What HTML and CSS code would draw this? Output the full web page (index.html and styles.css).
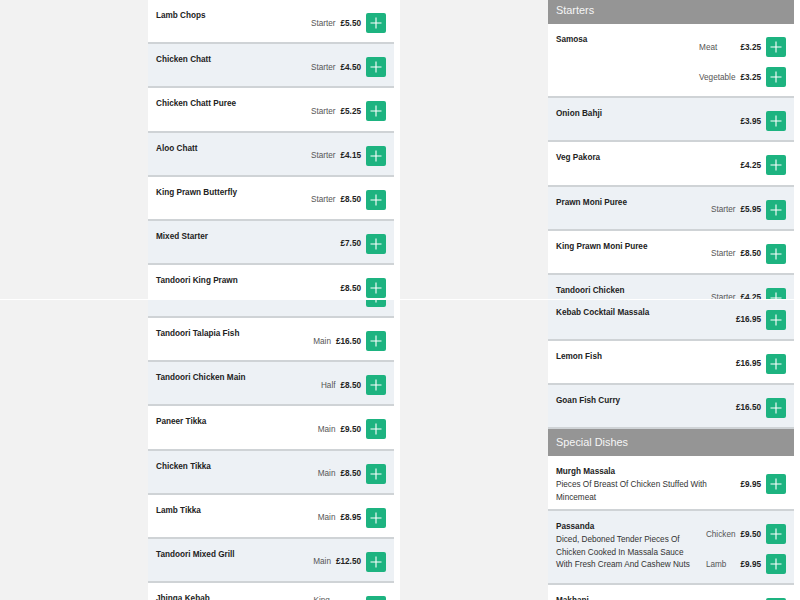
FILE: index.html
```html
<!DOCTYPE html>
<html lang="en">

<head>
    <meta charset="UTF-8">
    <title>Menu</title>
    <link rel="stylesheet" href="styles.css">
</head>

<body>
    <!-- top half of the page -->
    <div class="pane pane-top">
        <div class="col col-left">
            <div class="list">
                <div class="item">
                    <div class="info"><div class="name">Lamb Chops</div></div>
                    <div class="opts">
                        <span class="label">Starter</span><span class="price">£5.50</span>
                        <button class="add"><svg width="20" height="20" viewBox="0 0 20 20"><path d="M4.5 10H15.5M10 4.5V15.5" stroke="#fff" stroke-width="1.1"/></svg></button>
                    </div>
                </div>
                <div class="item alt">
                    <div class="info"><div class="name">Chicken Chatt</div></div>
                    <div class="opts">
                        <span class="label">Starter</span><span class="price">£4.50</span>
                        <button class="add"><svg width="20" height="20" viewBox="0 0 20 20"><path d="M4.5 10H15.5M10 4.5V15.5" stroke="#fff" stroke-width="1.1"/></svg></button>
                    </div>
                </div>
                <div class="item">
                    <div class="info"><div class="name">Chicken Chatt Puree</div></div>
                    <div class="opts">
                        <span class="label">Starter</span><span class="price">£5.25</span>
                        <button class="add"><svg width="20" height="20" viewBox="0 0 20 20"><path d="M4.5 10H15.5M10 4.5V15.5" stroke="#fff" stroke-width="1.1"/></svg></button>
                    </div>
                </div>
                <div class="item alt">
                    <div class="info"><div class="name">Aloo Chatt</div></div>
                    <div class="opts">
                        <span class="label">Starter</span><span class="price">£4.15</span>
                        <button class="add"><svg width="20" height="20" viewBox="0 0 20 20"><path d="M4.5 10H15.5M10 4.5V15.5" stroke="#fff" stroke-width="1.1"/></svg></button>
                    </div>
                </div>
                <div class="item">
                    <div class="info"><div class="name">King Prawn Butterfly</div></div>
                    <div class="opts">
                        <span class="label">Starter</span><span class="price">£8.50</span>
                        <button class="add"><svg width="20" height="20" viewBox="0 0 20 20"><path d="M4.5 10H15.5M10 4.5V15.5" stroke="#fff" stroke-width="1.1"/></svg></button>
                    </div>
                </div>
                <div class="item alt">
                    <div class="info"><div class="name">Mixed Starter</div></div>
                    <div class="opts">
                        <span class="label"></span><span class="price">£7.50</span>
                        <button class="add"><svg width="20" height="20" viewBox="0 0 20 20"><path d="M4.5 10H15.5M10 4.5V15.5" stroke="#fff" stroke-width="1.1"/></svg></button>
                    </div>
                </div>
                <div class="item">
                    <div class="info"><div class="name">Tandoori King Prawn</div></div>
                    <div class="opts">
                        <span class="label"></span><span class="price">£8.50</span>
                        <button class="add"><svg width="20" height="20" viewBox="0 0 20 20"><path d="M4.5 10H15.5M10 4.5V15.5" stroke="#fff" stroke-width="1.1"/></svg></button>
                    </div>
                </div>
            </div>
        </div>

        <div class="col col-right">
            <div class="list">
                <div class="cat">Starters</div>
                <div class="item">
                    <div class="info"><div class="name">Samosa</div></div>
                    <div class="opts">
                        <span class="label">Meat</span><span class="price">£3.25</span>
                        <button class="add"><svg width="20" height="20" viewBox="0 0 20 20"><path d="M4.5 10H15.5M10 4.5V15.5" stroke="#fff" stroke-width="1.1"/></svg></button>
                        <span class="label">Vegetable</span><span class="price">£3.25</span>
                        <button class="add"><svg width="20" height="20" viewBox="0 0 20 20"><path d="M4.5 10H15.5M10 4.5V15.5" stroke="#fff" stroke-width="1.1"/></svg></button>
                    </div>
                </div>
                <div class="item alt">
                    <div class="info"><div class="name">Onion Bahji</div></div>
                    <div class="opts">
                        <span class="label"></span><span class="price">£3.95</span>
                        <button class="add"><svg width="20" height="20" viewBox="0 0 20 20"><path d="M4.5 10H15.5M10 4.5V15.5" stroke="#fff" stroke-width="1.1"/></svg></button>
                    </div>
                </div>
                <div class="item">
                    <div class="info"><div class="name">Veg Pakora</div></div>
                    <div class="opts">
                        <span class="label"></span><span class="price">£4.25</span>
                        <button class="add"><svg width="20" height="20" viewBox="0 0 20 20"><path d="M4.5 10H15.5M10 4.5V15.5" stroke="#fff" stroke-width="1.1"/></svg></button>
                    </div>
                </div>
                <div class="item alt">
                    <div class="info"><div class="name">Prawn Moni Puree</div></div>
                    <div class="opts">
                        <span class="label">Starter</span><span class="price">£5.95</span>
                        <button class="add"><svg width="20" height="20" viewBox="0 0 20 20"><path d="M4.5 10H15.5M10 4.5V15.5" stroke="#fff" stroke-width="1.1"/></svg></button>
                    </div>
                </div>
                <div class="item">
                    <div class="info"><div class="name">King Prawn Moni Puree</div></div>
                    <div class="opts">
                        <span class="label">Starter</span><span class="price">£8.50</span>
                        <button class="add"><svg width="20" height="20" viewBox="0 0 20 20"><path d="M4.5 10H15.5M10 4.5V15.5" stroke="#fff" stroke-width="1.1"/></svg></button>
                    </div>
                </div>
                <div class="item alt">
                    <div class="info"><div class="name">Tandoori Chicken</div></div>
                    <div class="opts">
                        <span class="label">Starter</span><span class="price">£4.25</span>
                        <button class="add"><svg width="20" height="20" viewBox="0 0 20 20"><path d="M4.5 10H15.5M10 4.5V15.5" stroke="#fff" stroke-width="1.1"/></svg></button>
                    </div>
                </div>
            </div>
        </div>
    </div>

    <!-- bottom half, scrolled further down -->
    <div class="pane pane-bottom">
        <div class="col col-left">
            <div class="list">
                <div class="item alt">
                    <div class="info"><div class="name">Tandoori Chicken Tikka</div></div>
                    <div class="opts">
                        <span class="label"></span><span class="price">£8.50</span>
                        <button class="add"><svg width="20" height="20" viewBox="0 0 20 20"><path d="M4.5 10H15.5M10 4.5V15.5" stroke="#fff" stroke-width="1.1"/></svg></button>
                    </div>
                </div>
                <div class="item">
                    <div class="info"><div class="name">Tandoori Talapia Fish</div></div>
                    <div class="opts">
                        <span class="label">Main</span><span class="price">£16.50</span>
                        <button class="add"><svg width="20" height="20" viewBox="0 0 20 20"><path d="M4.5 10H15.5M10 4.5V15.5" stroke="#fff" stroke-width="1.1"/></svg></button>
                    </div>
                </div>
                <div class="item alt">
                    <div class="info"><div class="name">Tandoori Chicken Main</div></div>
                    <div class="opts">
                        <span class="label">Half</span><span class="price">£8.50</span>
                        <button class="add"><svg width="20" height="20" viewBox="0 0 20 20"><path d="M4.5 10H15.5M10 4.5V15.5" stroke="#fff" stroke-width="1.1"/></svg></button>
                    </div>
                </div>
                <div class="item">
                    <div class="info"><div class="name">Paneer Tikka</div></div>
                    <div class="opts">
                        <span class="label">Main</span><span class="price">£9.50</span>
                        <button class="add"><svg width="20" height="20" viewBox="0 0 20 20"><path d="M4.5 10H15.5M10 4.5V15.5" stroke="#fff" stroke-width="1.1"/></svg></button>
                    </div>
                </div>
                <div class="item alt">
                    <div class="info"><div class="name">Chicken Tikka</div></div>
                    <div class="opts">
                        <span class="label">Main</span><span class="price">£8.50</span>
                        <button class="add"><svg width="20" height="20" viewBox="0 0 20 20"><path d="M4.5 10H15.5M10 4.5V15.5" stroke="#fff" stroke-width="1.1"/></svg></button>
                    </div>
                </div>
                <div class="item">
                    <div class="info"><div class="name">Lamb Tikka</div></div>
                    <div class="opts">
                        <span class="label">Main</span><span class="price">£8.95</span>
                        <button class="add"><svg width="20" height="20" viewBox="0 0 20 20"><path d="M4.5 10H15.5M10 4.5V15.5" stroke="#fff" stroke-width="1.1"/></svg></button>
                    </div>
                </div>
                <div class="item alt">
                    <div class="info"><div class="name">Tandoori Mixed Grill</div></div>
                    <div class="opts">
                        <span class="label">Main</span><span class="price">£12.50</span>
                        <button class="add"><svg width="20" height="20" viewBox="0 0 20 20"><path d="M4.5 10H15.5M10 4.5V15.5" stroke="#fff" stroke-width="1.1"/></svg></button>
                    </div>
                </div>
                <div class="item">
                    <div class="info"><div class="name">Jhinga Kebab</div></div>
                    <div class="opts">
                        <span class="label label-wrap">King Prawn</span><span class="price">£9.95</span>
                        <button class="add"><svg width="20" height="20" viewBox="0 0 20 20"><path d="M4.5 10H15.5M10 4.5V15.5" stroke="#fff" stroke-width="1.1"/></svg></button>
                    </div>
                </div>
            </div>
        </div>

        <div class="col col-right">
            <div class="list">
                <div class="item alt">
                    <div class="info"><div class="name">Kebab Cocktail Massala</div></div>
                    <div class="opts">
                        <span class="label"></span><span class="price">£16.95</span>
                        <button class="add"><svg width="20" height="20" viewBox="0 0 20 20"><path d="M4.5 10H15.5M10 4.5V15.5" stroke="#fff" stroke-width="1.1"/></svg></button>
                    </div>
                </div>
                <div class="item">
                    <div class="info"><div class="name">Lemon Fish</div></div>
                    <div class="opts">
                        <span class="label"></span><span class="price">£16.95</span>
                        <button class="add"><svg width="20" height="20" viewBox="0 0 20 20"><path d="M4.5 10H15.5M10 4.5V15.5" stroke="#fff" stroke-width="1.1"/></svg></button>
                    </div>
                </div>
                <div class="item alt">
                    <div class="info"><div class="name">Goan Fish Curry</div></div>
                    <div class="opts">
                        <span class="label"></span><span class="price">£16.50</span>
                        <button class="add"><svg width="20" height="20" viewBox="0 0 20 20"><path d="M4.5 10H15.5M10 4.5V15.5" stroke="#fff" stroke-width="1.1"/></svg></button>
                    </div>
                </div>
                <div class="cat">Special Dishes</div>
                <div class="item">
                    <div class="info">
                        <div class="name">Murgh Massala</div>
                        <div class="desc">Pieces Of Breast Of Chicken Stuffed With Mincemeat</div>
                    </div>
                    <div class="opts">
                        <span class="label"></span><span class="price">£9.95</span>
                        <button class="add"><svg width="20" height="20" viewBox="0 0 20 20"><path d="M4.5 10H15.5M10 4.5V15.5" stroke="#fff" stroke-width="1.1"/></svg></button>
                    </div>
                </div>
                <div class="item alt">
                    <div class="info">
                        <div class="name">Passanda</div>
                        <div class="desc">Diced, Deboned Tender Pieces Of Chicken Cooked In Massala Sauce With Fresh Cream And Cashew Nuts</div>
                    </div>
                    <div class="opts">
                        <span class="label">Chicken</span><span class="price">£9.50</span>
                        <button class="add"><svg width="20" height="20" viewBox="0 0 20 20"><path d="M4.5 10H15.5M10 4.5V15.5" stroke="#fff" stroke-width="1.1"/></svg></button>
                        <span class="label">Lamb</span><span class="price">£9.95</span>
                        <button class="add"><svg width="20" height="20" viewBox="0 0 20 20"><path d="M4.5 10H15.5M10 4.5V15.5" stroke="#fff" stroke-width="1.1"/></svg></button>
                    </div>
                </div>
                <div class="item">
                    <div class="info"><div class="name">Makhani</div></div>
                    <div class="opts">
                        <span class="label"></span><span class="price">£9.95</span>
                        <button class="add"><svg width="20" height="20" viewBox="0 0 20 20"><path d="M4.5 10H15.5M10 4.5V15.5" stroke="#fff" stroke-width="1.1"/></svg></button>
                    </div>
                </div>
            </div>
        </div>
    </div>
</body>

</html>
```

FILE: styles.css
```css
* {
    box-sizing: border-box;
}

body {
    margin: 0;
    padding: 0;
    background: #f2f2f2;
    font-family: "Liberation Sans", Arial, sans-serif;
    font-size: 8.2px;
    color: #222;
    overflow: hidden;
}

/* two scroll positions stacked on each other */
.pane {
    display: flex;
    gap: 148px;
    height: 300px;
    padding-left: 148px;
    overflow: hidden;
}

.pane-top {
    border-bottom: 1px solid #fff;
}

.col {
    width: 252px;
    padding-right: 6px; /* scrollbar track */
    background: #fff;
    overflow: hidden;
}

.pane-top .col-right .list {
    margin-top: -3px;
}

.pane-bottom .col-left .list {
    margin-top: -26.2px;
}

.pane-bottom .col-right .list {
    margin-top: -3.5px;
}

.cat {
    height: 27px;
    line-height: 27px;
    padding-left: 8px;
    background: #959595;
    color: #f6f6f6;
    font-size: 10.9px;
}

.item {
    display: flex;
    gap: 10px;
    padding: 0 8px;
    background: #fff;
    border-bottom: 2px solid #cfd3d6;
}

.item.alt {
    background: #edf1f5;
}

.info {
    flex: 1;
    padding: 11px 0 5px;
}

.name {
    font-weight: bold;
    line-height: 10px;
}

.desc {
    margin-top: 2px;
    line-height: 12.5px;
    color: #333;
}

.opts {
    flex: none;
    display: grid;
    grid-template-columns: auto auto 20px;
    column-gap: 5px;
    row-gap: 10px;
    align-content: center;
    align-items: center;
    padding: 13px 0 9.2px;
}

.label {
    color: #555;
}

.label-wrap {
    width: 22px;
    line-height: 10px;
}

.price {
    justify-self: end;
    font-weight: bold;
}

.add {
    display: flex;
    align-items: center;
    justify-content: center;
    width: 20px;
    height: 20px;
    padding: 0;
    border: 0;
    border-radius: 2px;
    background: #1db380;
}
```
